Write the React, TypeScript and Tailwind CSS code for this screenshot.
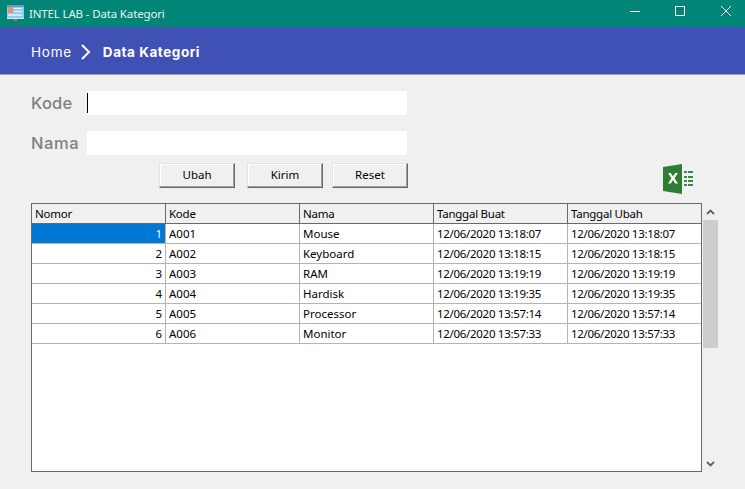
const rows = [
  ["1", "A001", "Mouse", "12/06/2020 13:18:07", "12/06/2020 13:18:07"],
  ["2", "A002", "Keyboard", "12/06/2020 13:18:15", "12/06/2020 13:18:15"],
  ["3", "A003", "RAM", "12/06/2020 13:19:19", "12/06/2020 13:19:19"],
  ["4", "A004", "Hardisk", "12/06/2020 13:19:35", "12/06/2020 13:19:35"],
  ["5", "A005", "Processor", "12/06/2020 13:57:14", "12/06/2020 13:57:14"],
  ["6", "A006", "Monitor", "12/06/2020 13:57:33", "12/06/2020 13:57:33"],
];
const headers = ["Nomor", "Kode", "Nama", "Tanggal Buat", "Tanggal Ubah"];

function AppIcon() {
  return (
    <svg width="17" height="18" viewBox="0 0 17 18" className="shrink-0">
      <rect x="0" y="0" width="17" height="13" fill="#8fcdf0" />
      <rect x="0" y="0" width="17" height="2" fill="#5f9fd0" />
      <rect x="1" y="2" width="5" height="6" fill="#f2905a" />
      <rect x="7" y="3" width="8" height="1" fill="#e8f4fb" />
      <rect x="7" y="6" width="8" height="1" fill="#e8f4fb" />
      <rect x="1" y="9" width="14" height="2" fill="#cfe9f8" />
      <rect x="0" y="13" width="17" height="1" fill="#dfe6ea" />
      <rect x="7" y="14" width="3" height="2" fill="#78858c" />
      <rect x="5" y="16" width="7" height="1" fill="#566067" />
    </svg>
  );
}

function ExcelIcon() {
  return (
    <svg width="33" height="30" viewBox="0 0 33 30" className="block">
      <rect x="19" y="4" width="13" height="22" fill="#eef2f5" />
      <path d="M0 3 L19 0 V30 L0 27 Z" fill="#2e7d32" />
      <path d="M5 9 H7.8 L10 12.6 L12.2 9 H15 L11.5 14.3 L15 19.5 H12.2 L10 16 L7.8 19.5 H5 L8.5 14.3 Z" fill="#ffffff" />
      <g fill="#3a8a3e">
        <rect x="21" y="7" width="3" height="2" />
        <rect x="25" y="7" width="5" height="2" />
        <rect x="21" y="12" width="3" height="2" />
        <rect x="25" y="12" width="5" height="2" />
        <rect x="21" y="16" width="3" height="2" />
        <rect x="25" y="16" width="5" height="2" />
        <rect x="21" y="20" width="3" height="2" />
        <rect x="25" y="20" width="5" height="2" />
      </g>
    </svg>
  );
}

function Btn({ label }: { label: string }) {
  return (
    <button className="w-[76px] h-[25px] bg-[#f0f0f0] text-[11.5px] text-black border border-t-[#e3e3e3] border-l-[#e3e3e3] border-r-[#696969] border-b-[#696969] shadow-[inset_-1px_-1px_0_#a0a0a0,inset_1px_1px_0_#ffffff] flex items-center justify-center pb-px">
      {label}
    </button>
  );
}

export default function App() {
  return (
    <div className="w-[745px] h-[489px] bg-[#f0f0f0] overflow-hidden flex flex-col font-['Noto_Sans','Open_Sans',sans-serif]">
      {/* Title bar */}
      <div className="h-[27px] bg-[#008577] flex items-center pl-[7px] text-white shrink-0">
        <AppIcon />
        <span className="ml-[5px] text-[11.5px] tracking-[-0.15px] text-[#e6f5f2]">INTEL LAB - Data Kategori</span>
        <div className="ml-auto flex items-center h-full pb-[3px]">
          <svg width="12" height="12" viewBox="0 0 12 12" className="mr-[33px]">
            <path d="M0 5.5 H10" stroke="#fff" strokeWidth="1" />
          </svg>
          <svg width="12" height="12" viewBox="0 0 12 12" className="mr-[34px]">
            <rect x="0.5" y="0.5" width="9" height="9" fill="none" stroke="#fff" strokeWidth="1" />
          </svg>
          <svg width="12" height="12" viewBox="0 0 12 12" className="mr-[12px]">
            <path d="M0 0 L10 10 M10 0 L0 10" stroke="#fff" strokeWidth="1" />
          </svg>
        </div>
      </div>

      {/* Breadcrumb */}
      <div className="h-[48px] bg-[#3f51b5] border-b border-[#9e9e9e] flex items-center pl-[31px] pt-[3px] text-white shrink-0 font-['Inter',sans-serif]">
        <span className="text-[13.5px] tracking-[0.75px]">Home</span>
        <svg width="12" height="16" viewBox="0 0 12 16" className="ml-[8px]">
          <path d="M2 1 L9 8 L2 15" fill="none" stroke="#fff" strokeWidth="2" />
        </svg>
        <span className="ml-[11px] text-[13.5px] font-bold tracking-[0.55px]">Data Kategori</span>
      </div>

      {/* Form */}
      <div className="pl-[31px] pt-[16px] shrink-0 font-['Inter',sans-serif]">
        <div className="flex items-center h-[24px]">
          <span className="w-[56px] text-[16.5px] font-medium tracking-[0.2px] text-[#808080]">Kode</span>
          <div className="w-[320px] h-[24px] bg-white flex items-center">
            <div className="w-px h-[20px] bg-black" />
          </div>
        </div>
        <div className="flex items-center h-[24px] mt-[16px]">
          <span className="w-[56px] text-[16.5px] font-medium tracking-[0.6px] text-[#808080]">Nama</span>
          <div className="w-[320px] h-[24px] bg-white" />
        </div>
      </div>

      {/* Buttons and export */}
      <div className="flex items-start pl-[159px] pt-[8px] h-[48px] shrink-0">
        <Btn label="Ubah" />
        <div className="w-[12px]" />
        <Btn label="Kirim" />
        <div className="w-[9px]" />
        <Btn label="Reset" />
        <div className="ml-[255px] mt-px">
          <ExcelIcon />
        </div>
      </div>

      {/* Table and scrollbar */}
      <div className="flex pl-[31px] shrink-0">
        <div className="w-[671px] h-[269px] border border-[#696969] bg-white text-[11.5px] text-black">
          <div className="flex h-[20px] bg-[#f0f0f0] border-b border-[#696969]">
            {headers.map((h, i) => (
              <div
                key={h}
                className={`pl-[3px] leading-[19px] tracking-[-0.25px] border-[#696969] ${i < 4 ? "w-[134px] border-r" : "w-[133px]"}`}
              >
                {h}
              </div>
            ))}
          </div>
          {rows.map((r, ri) => (
            <div key={r[0]} className="flex h-[20px] border-b border-[#b4b4b4]">
              {r.map((c, i) => (
                <div
                  key={i}
                  className={`leading-[20px] border-[#b4b4b4] ${i < 4 ? "w-[134px] border-r" : "w-[133px]"} ${
                    i === 0 ? "text-right pr-[3px]" : "pl-[3px]"
                  } ${i >= 3 ? "tracking-[-0.3px]" : ""} ${i === 0 && ri === 0 ? "bg-[#0078d7] text-white" : ""}`}
                >
                  {c}
                </div>
              ))}
            </div>
          ))}
        </div>
        <div className="w-[15px] ml-px h-[269px] flex flex-col items-center">
          <div className="h-[17px] flex items-center justify-center">
            <svg width="9" height="6" viewBox="0 0 9 6">
              <path d="M1 5 L4.5 1.5 L8 5" fill="none" stroke="#606060" strokeWidth="1.8" />
            </svg>
          </div>
          <div className="w-[15px] h-[128px] bg-[#cdcdcd]" />
          <div className="mt-auto h-[17px] flex items-center justify-center">
            <svg width="9" height="6" viewBox="0 0 9 6">
              <path d="M1 1 L4.5 4.5 L8 1" fill="none" stroke="#606060" strokeWidth="1.8" />
            </svg>
          </div>
        </div>
      </div>
    </div>
  );
}
